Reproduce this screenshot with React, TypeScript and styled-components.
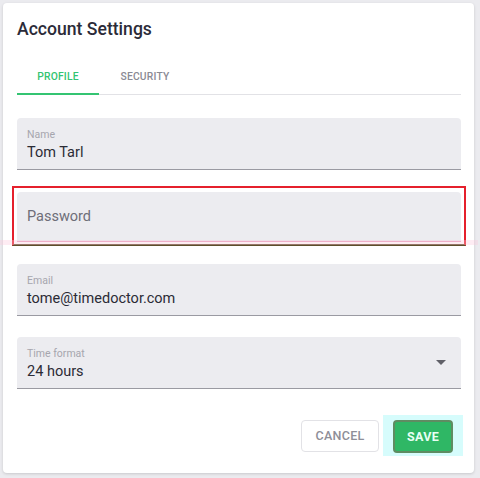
import React from "react";
import styled, { createGlobalStyle } from "styled-components";

const GlobalStyle = createGlobalStyle`
  html, body {
    margin: 0;
    padding: 0;
    background: #ebebef;
    font-family: Roboto, "Noto Sans", Arial, sans-serif;
  }
`;

const Page = styled.div`
  width: 480px;
  height: 478px;
  padding: 3px 6px 5px 3px;
  box-sizing: border-box;
  display: flex;
`;

const Card = styled.div`
  flex: 1;
  background: #fff;
  border-radius: 4px;
  box-shadow: 0 1px 3px rgba(0, 0, 0, 0.15);
  padding: 14px 13px 0 14px;
  display: flex;
  flex-direction: column;
  position: relative;
`;

const Title = styled.h1`
  margin: 0;
  font-size: 17.6px;
  font-weight: 500;
  color: #2b2b38;
  line-height: 24px;
`;

const Tabs = styled.div`
  display: flex;
  margin-top: 18px;
  border-bottom: 1px solid #e2e2e6;
`;

const Tab = styled.div<{ $active?: boolean }>`
  width: ${(p) => (p.$active ? "82px" : "92px")};
  height: 36px;
  display: flex;
  align-items: center;
  justify-content: center;
  font-size: 10.3px;
  font-weight: 500;
  letter-spacing: 0.2px;
  color: ${(p) => (p.$active ? "#34c472" : "#8a8a94")};
  margin-bottom: -1px;
  border-bottom: 2px solid ${(p) => (p.$active ? "#34c472" : "transparent")};
  box-sizing: border-box;
`;

const Fields = styled.div`
  display: flex;
  flex-direction: column;
  margin-top: 23px;
`;

const Field = styled.div<{ $hasLabel?: boolean; $error?: boolean }>`
  height: ${(p) => (p.$error ? "50px" : "52px")};
  background: #ececf0;
  border-radius: 4px 4px 0 0;
  border-bottom: 1px solid ${(p) => (p.$error ? "#e9a3bf" : "#9a9aa2")};
  box-sizing: border-box;
  padding: 0 12px 0 10px;
  display: flex;
  flex-direction: column;
  justify-content: ${(p) => (p.$hasLabel ? "flex-start" : "center")};
  padding-top: ${(p) => (p.$hasLabel ? "11px" : "0")};
  position: relative;
`;

const Label = styled.div`
  font-size: 10.5px;
  color: #a6a6ae;
  line-height: 12px;
`;

const Value = styled.div`
  font-size: 14.5px;
  color: #2b2b35;
  line-height: 20px;
  margin-top: 2px;
`;

const Placeholder = styled.div`
  font-size: 14.5px;
  color: #6e6e78;
  line-height: 20px;
`;

const Gap = styled.div<{ $h: number }>`
  height: ${(p) => p.$h}px;
`;

const Highlight = styled.div`
  border: 2px solid #e5202c;
  border-bottom-color: #5e4e2c;
  padding: 4px 3px 2px 3px;
  margin: 0 -5px;
`;

const PinkBand = styled.div`
  position: absolute;
  left: -17px;
  right: -17px;
  bottom: -4px;
  height: 5px;
  background: rgba(252, 200, 222, 0.35);
  pointer-events: none;
`;

const Arrow = styled.div`
  position: absolute;
  right: 15px;
  top: 23px;
  width: 0;
  height: 0;
  border-left: 5px solid transparent;
  border-right: 5px solid transparent;
  border-top: 5px solid #606068;
`;

const Actions = styled.div`
  display: flex;
  justify-content: flex-end;
  align-items: center;
  gap: 4px;
  margin-top: 26px;
  margin-right: -2px;
`;

const CancelButton = styled.button`
  width: 78px;
  height: 32px;
  background: #fff;
  border: 1px solid #e2e2e6;
  border-radius: 4px;
  font-family: inherit;
  font-size: 12.5px;
  font-weight: 500;
  color: #8e8e98;
  letter-spacing: 0.3px;
`;

const SaveGlow = styled.div`
  background: #d6fcfc;
  padding: 5px 10px 3px 10px;
`;

const SaveButton = styled.button`
  width: 60px;
  height: 33px;
  background: #2fb765;
  border: 2px solid #5f8c62;
  border-radius: 4px;
  font-family: inherit;
  font-size: 12.5px;
  font-weight: 700;
  color: #e8fff4;
  letter-spacing: 0.3px;
  display: block;
`;

export default function App() {
  return (
    <>
      <GlobalStyle />
      <Page>
        <Card>
          <Title>Account Settings</Title>
          <Tabs>
            <Tab $active>PROFILE</Tab>
            <Tab>SECURITY</Tab>
          </Tabs>
          <Fields>
            <Field $hasLabel>
              <Label>Name</Label>
              <Value>Tom Tarl</Value>
            </Field>
            <Gap $h={16} />
            <Highlight>
              <Field $error>
                <Placeholder>Password</Placeholder>
                <PinkBand />
              </Field>
            </Highlight>
            <Gap $h={18} />
            <Field $hasLabel>
              <Label>Email</Label>
              <Value>tome@timedoctor.com</Value>
            </Field>
            <Gap $h={21} />
            <Field $hasLabel>
              <Label>Time format</Label>
              <Value>24 hours</Value>
              <Arrow />
            </Field>
          </Fields>
          <Actions>
            <CancelButton>CANCEL</CancelButton>
            <SaveGlow>
              <SaveButton>SAVE</SaveButton>
            </SaveGlow>
          </Actions>
        </Card>
      </Page>
    </>
  );
}
